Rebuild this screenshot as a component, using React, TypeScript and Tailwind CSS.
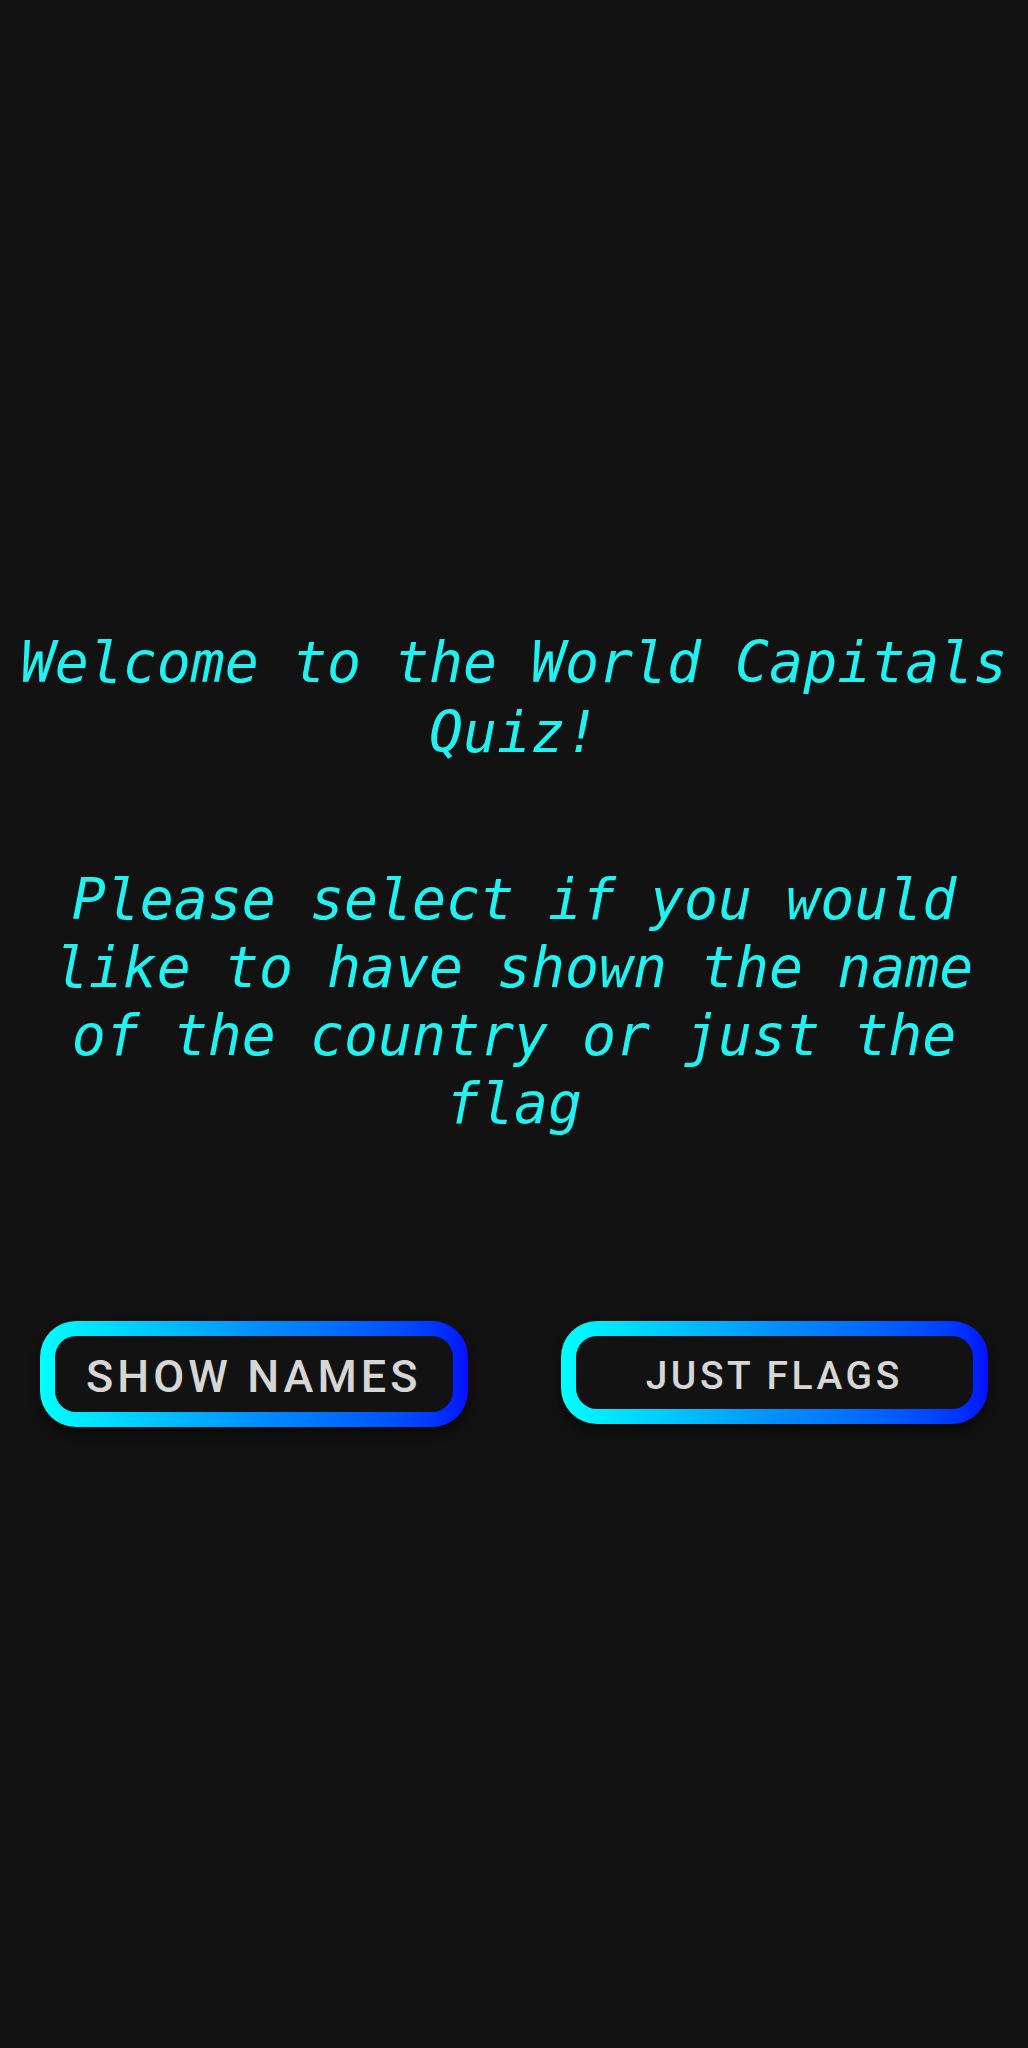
import React from 'react';

const mono = { fontFamily: '"DejaVu Sans Mono", "Liberation Mono", monospace' };

export default function App() {
  return (
    <div className="min-h-[2048px] w-full bg-[#121212] flex flex-col items-center pt-[628px]">
      <h1
        className="w-full px-2 text-center italic font-normal text-[56.5px] leading-[70px] text-[#1ff2f0]"
        style={mono}
      >
        Welcome to the World Capitals Quiz!
      </h1>

      <p
        className="mt-[98px] w-[960px] text-center italic text-[56.5px] leading-[68px] text-[#1ff2f0]"
        style={mono}
      >
        Please select if you would like to have shown the name of the country or just the flag
      </p>

      <div className="mt-[183px] w-full px-10 flex items-start gap-[93px]">
        <button className="flex-1 rounded-[36px] bg-gradient-to-r from-[#00ffff] via-[#0090ff] to-[#0a0aff] p-[15px] shadow-[0_6px_10px_rgba(0,0,0,0.6)]">
          <div className="h-[76px] pt-[6px] rounded-[21px] bg-[#121212] flex items-center justify-center">
            <span className="font-['Roboto'] font-medium uppercase text-[45px] tracking-[0.09em] text-[#d6d6d6]">
              Show Names
            </span>
          </div>
        </button>
        <button className="flex-1 rounded-[36px] bg-gradient-to-r from-[#00ffff] via-[#0090ff] to-[#0a0aff] p-[15px] shadow-[0_6px_10px_rgba(0,0,0,0.6)]">
          <div className="h-[73px] pt-[8px] rounded-[21px] bg-[#121212] flex items-center justify-center">
            <span className="font-['Roboto'] font-medium uppercase text-[39px] tracking-[0.09em] text-[#d6d6d6]">
              Just Flags
            </span>
          </div>
        </button>
      </div>
    </div>
  );
}
